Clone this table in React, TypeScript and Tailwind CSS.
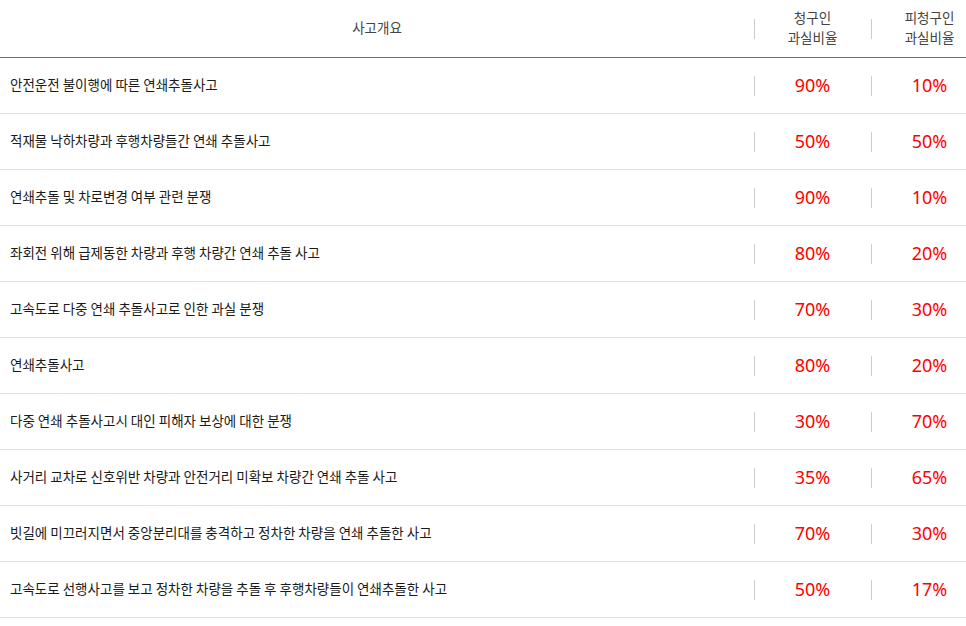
import React from "react";

const rows: [string, string, string][] = [
  ["안전운전 불이행에 따른 연쇄추돌사고", "90%", "10%"],
  ["적재물 낙하차량과 후행차량들간 연쇄 추돌사고", "50%", "50%"],
  ["연쇄추돌 및 차로변경 여부 관련 분쟁", "90%", "10%"],
  ["좌회전 위해 급제동한 차량과 후행 차량간 연쇄 추돌 사고", "80%", "20%"],
  ["고속도로 다중 연쇄 추돌사고로 인한 과실 분쟁", "70%", "30%"],
  ["연쇄추돌사고", "80%", "20%"],
  ["다중 연쇄 추돌사고시 대인 피해자 보상에 대한 분쟁", "30%", "70%"],
  ["사거리 교차로 신호위반 차량과 안전거리 미확보 차량간 연쇄 추돌 사고", "35%", "65%"],
  ["빗길에 미끄러지면서 중앙분리대를 충격하고 정차한 차량을 연쇄 추돌한 사고", "70%", "30%"],
  ["고속도로 선행사고를 보고 정차한 차량을 추돌 후 후행차량들이 연쇄추돌한 사고", "50%", "17%"],
];

const kr = { fontFamily: '"Noto Sans CJK KR", "Noto Sans", sans-serif' };
const num = { fontFamily: '"Noto Sans", "Liberation Sans", sans-serif' };

function Sep() {
  return <span className="absolute left-0 top-1/2 -translate-y-1/2 h-[20px] w-px bg-[#cccccc]" />;
}

export default function App() {
  return (
    <div className="w-[966px] overflow-hidden bg-white" style={kr}>
      <div className="w-[988px]">
        <div className="grid grid-cols-[754px_117px_117px] h-[58px] border-b border-[#707070] text-[13.5px] leading-[20px] text-[#444444]">
          <div className="flex items-center justify-center pb-[4px]">사고개요</div>
          <div className="relative flex flex-col items-center justify-center pb-[4px]">
            <Sep />
            <span>청구인</span>
            <span>과실비율</span>
          </div>
          <div className="relative flex flex-col items-center justify-center pb-[4px]">
            <Sep />
            <span>피청구인</span>
            <span>과실비율</span>
          </div>
        </div>
        {rows.map(([t, a, b], i) => (
          <div
            key={i}
            className="grid grid-cols-[754px_117px_117px] h-[56px] border-b border-[#e2e2e2]"
          >
            <div className="flex items-center pl-[10px] pb-[2px] text-[13.5px] text-[#1a1a1a]">
              {t}
            </div>
            <div className="relative flex items-center justify-center text-[18px] text-[#ff0000]" style={num}>
              <Sep />
              {a}
            </div>
            <div className="relative flex items-center justify-center text-[18px] text-[#ff0000]" style={num}>
              <Sep />
              {b}
            </div>
          </div>
        ))}
      </div>
    </div>
  );
}
